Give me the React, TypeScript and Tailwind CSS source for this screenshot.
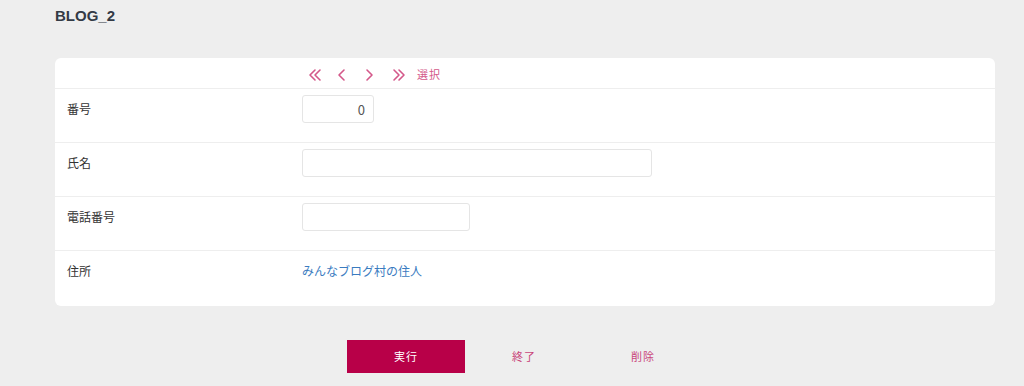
import React from "react";

const font = { fontFamily: '"Noto Sans CJK JP", "Noto Sans", "Liberation Sans", sans-serif' };

function Chevrons({ dir, double }: { dir: "l" | "r"; double?: boolean }) {
  const d = dir === "l" ? "M9 3 L4 8 L9 13" : "M5 3 L10 8 L5 13";
  const d2 = dir === "l" ? "M14 3 L9 8 L14 13" : "M10 3 L15 8 L10 13";
  return (
    <svg width={double ? 18 : 14} height="16" viewBox={double ? "0 0 18 16" : "0 0 14 16"} fill="none" stroke="#d4588a" strokeWidth="1.6" strokeLinecap="round" strokeLinejoin="round">
      <path d={d} />
      {double && <path d={d2} />}
    </svg>
  );
}

function Row({ label, children, last }: { label: string; children: React.ReactNode; last?: boolean }) {
  return (
    <div className={`flex pt-[6px] ${last ? "pb-[21px]" : "pb-[19px] border-b border-[#eeeeee]"}`}>
      <div className="w-[247px] pl-3 h-7 flex items-center text-[12px] text-[#333]">{label}</div>
      <div className="flex-1 h-7 flex items-center">{children}</div>
    </div>
  );
}

export default function App() {
  return (
    <div className="min-h-screen bg-[#eeeeee] px-[55px] pt-[6px] pb-3" style={font}>
      <h1 className="text-[15px] font-bold text-[#333a45] h-[20px] leading-[20px]" style={{ fontFamily: '"Liberation Sans", Arial, sans-serif' }}>
        BLOG_2
      </h1>
      <div className="mt-[32px] w-[940px] bg-white rounded-md">
        <div className="flex items-center h-[31px] border-b border-[#eeeeee] pl-[250px] pt-[3px]">
          <button className="w-[20px] flex justify-center"><Chevrons dir="l" double /></button>
          <button className="ml-[10px] w-[14px] flex justify-center"><Chevrons dir="l" /></button>
          <button className="ml-[13px] w-[14px] flex justify-center"><Chevrons dir="r" /></button>
          <button className="ml-[12px] w-[20px] flex justify-center"><Chevrons dir="r" double /></button>
          <button className="ml-[9px] text-[11px] text-[#d4588a] tracking-[1px]">選択</button>
        </div>
        <Row label="番号">
          <input
            readOnly
            value="0"
            className="w-[72px] h-7 border border-[#e5e5e5] rounded-[3px] px-2 text-right text-[13px] text-[#555] outline-none"
            style={font}
          />
        </Row>
        <Row label="氏名">
          <input className="w-[350px] h-7 border border-[#e5e5e5] rounded-[3px] px-2 text-[13px] outline-none" />
        </Row>
        <Row label="電話番号">
          <input className="w-[168px] h-7 border border-[#e5e5e5] rounded-[3px] px-2 text-[13px] outline-none" />
        </Row>
        <Row label="住所" last>
          <span className="text-[12px] text-[#3a7bbf]">みんなブログ村の住人</span>
        </Row>
      </div>
      <div className="w-[940px] flex justify-center mt-[34px]">
        <button className="w-[118px] h-[33px] bg-[#b80048] text-white text-[11px] tracking-[1px]">実行</button>
        <button className="w-[118px] h-[33px] text-[#c9457a] text-[11px] tracking-[1px]">終了</button>
        <button className="w-[120px] h-[33px] text-[#c9457a] text-[11px] tracking-[1px]">削除</button>
      </div>
    </div>
  );
}
